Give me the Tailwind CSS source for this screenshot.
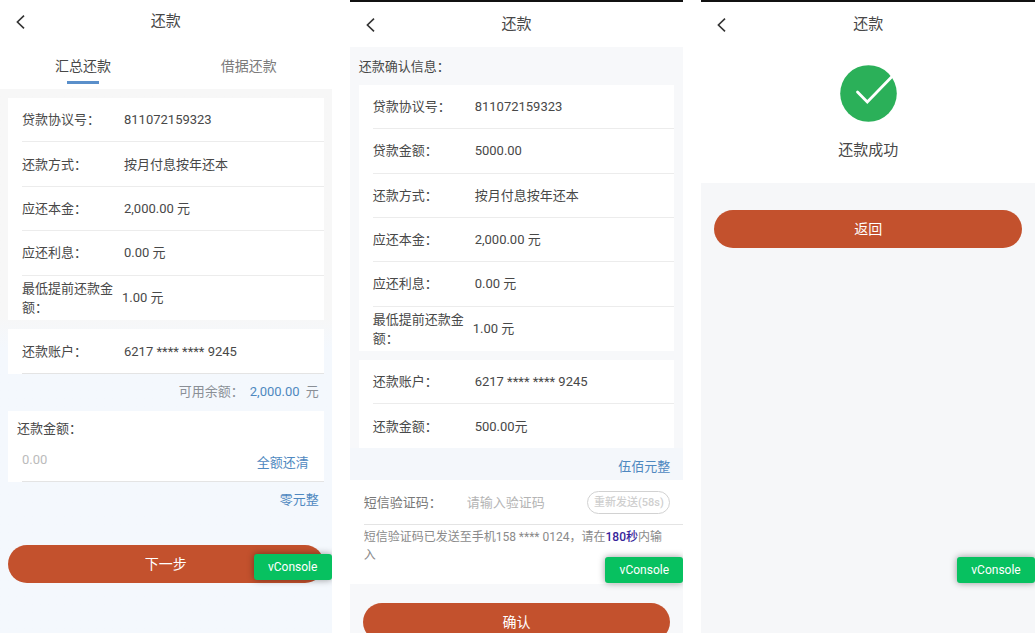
<!DOCTYPE html>
<html lang="zh-CN">
<head>
<meta charset="utf-8">
<meta name="viewport" content="width=device-width, initial-scale=1">
<title>还款</title>
<script src="https://cdn.jsdelivr.net/npm/@tailwindcss/browser@4"></script>
</head>
<body class="bg-white font-[Roboto,'Noto_Sans_CJK_SC',sans-serif] text-[13px] leading-[19px] text-[#484848]">
<div class="grid h-screen grid-cols-[332fr_334fr_334fr] gap-[18px] overflow-hidden">

  <!-- 汇总还款 -->
  <main class="relative flex min-w-0 flex-col overflow-hidden bg-linear-to-b from-[#f7f7f7] from-50% to-[#f4f8fd] to-55%">
    <header class="grid h-[43px] shrink-0 grid-cols-[1fr_auto_1fr] items-center bg-white px-4">
      <button type="button" aria-label="返回上一页" class="w-4">
        <svg class="h-4 w-2.5" viewBox="0 0 10 16" fill="none" stroke="#333" stroke-width="1.6"><path d="M8 1.6 1.4 8 8 14.4"/></svg>
      </button>
      <h1 class="text-[15px]">还款</h1>
    </header>
    <nav class="grid h-[46px] shrink-0 grid-cols-2 bg-white text-sm">
      <button type="button" class="flex flex-col items-center pt-[13px]">汇总还款<span class="mt-[5px] h-[3px] w-8 bg-[#5a8fca]"></span></button>
      <button type="button" class="flex flex-col items-center pt-[13px] text-[#7b7b7b]">借据还款</button>
    </nav>
    <div class="px-2 pt-[9px]">
      <dl class="grid h-[222px] grid-rows-5 bg-white pl-[14px]">
        <div class="flex items-center border-b border-[#ececec]"><dt class="w-[102px] shrink-0">贷款协议号：</dt><dd>811072159323</dd></div>
        <div class="flex items-center border-b border-[#ececec]"><dt class="w-[102px] shrink-0">还款方式：</dt><dd>按月付息按年还本</dd></div>
        <div class="flex items-center border-b border-[#ececec]"><dt class="w-[102px] shrink-0">应还本金：</dt><dd>2,000.00 元</dd></div>
        <div class="flex items-center border-b border-[#ececec]"><dt class="w-[102px] shrink-0">应还利息：</dt><dd>0.00 元</dd></div>
        <div class="flex items-center"><dt class="w-[100px] shrink-0 pr-2">最低提前还款金额：</dt><dd>1.00 元</dd></div>
      </dl>
      <dl class="mt-[9px] bg-white pl-[14px]">
        <div class="flex h-[45px] items-center border-b border-[#e4e4e4]"><dt class="w-[102px] shrink-0">还款账户：</dt><dd>6217 **** **** 9245</dd></div>
      </dl>
      <p class="flex h-[35px] items-center justify-end gap-1.5 pr-[5px] text-[#8a8f96]"><span>可用余额：</span><span class="text-[#4f88c0]">2,000.00</span><span>元</span></p>
      <section class="mt-[2px] bg-white pt-2 pl-[9px]">
        <label for="amount" class="block">还款金额：</label>
        <div class="ml-[5px] flex h-11 items-center border-b border-[#e4e4e4] pr-[15px]">
          <input id="amount" type="text" placeholder="0.00" class="min-w-0 flex-1 outline-none placeholder:text-[#bbb]">
          <button type="button" class="pt-[5px] text-[#4f88c0]">全额还清</button>
        </div>
      </section>
      <p class="flex h-[34px] items-center justify-end pr-[5px] text-[#4f88c0]">零元整</p>
      <button type="button" class="mt-[29px] h-[38px] w-full rounded-full bg-[#c3512d] text-sm text-white">下一步</button>
    </div>
    <button type="button" class="absolute right-0 bottom-[53px] h-[26px] w-[78px] rounded-[3px] bg-[#07c160] text-xs text-white shadow-[0_0_7px_rgba(0,0,0,0.4)]">vConsole</button>
  </main>

  <!-- 还款确认信息 -->
  <main class="relative flex min-w-0 flex-col overflow-hidden border-t-2 border-[#111] bg-[#f7f8fa]">
    <header class="grid h-[45px] shrink-0 grid-cols-[1fr_auto_1fr] items-center bg-white px-4">
      <button type="button" aria-label="返回上一页" class="w-4">
        <svg class="h-4 w-2.5" viewBox="0 0 10 16" fill="none" stroke="#333" stroke-width="1.6"><path d="M8 1.6 1.4 8 8 14.4"/></svg>
      </button>
      <h1 class="text-[15px]">还款</h1>
    </header>
    <h2 class="flex h-[38px] shrink-0 items-center pl-[9px]">还款确认信息：</h2>
    <div class="shrink-0 px-[9px]">
      <dl class="grid h-[266px] grid-rows-6 bg-white pl-[14px]">
        <div class="flex items-center border-b border-[#ececec]"><dt class="w-[102px] shrink-0">贷款协议号：</dt><dd>811072159323</dd></div>
        <div class="flex items-center border-b border-[#ececec]"><dt class="w-[102px] shrink-0">贷款金额：</dt><dd>5000.00</dd></div>
        <div class="flex items-center border-b border-[#ececec]"><dt class="w-[102px] shrink-0">还款方式：</dt><dd>按月付息按年还本</dd></div>
        <div class="flex items-center border-b border-[#ececec]"><dt class="w-[102px] shrink-0">应还本金：</dt><dd>2,000.00 元</dd></div>
        <div class="flex items-center border-b border-[#ececec]"><dt class="w-[102px] shrink-0">应还利息：</dt><dd>0.00 元</dd></div>
        <div class="flex items-center"><dt class="w-[100px] shrink-0 pr-2">最低提前还款金额：</dt><dd>1.00 元</dd></div>
      </dl>
      <dl class="mt-[9px] bg-white pl-[14px]">
        <div class="flex h-11 items-center border-b border-[#ececec]"><dt class="w-[102px] shrink-0">还款账户：</dt><dd>6217 **** **** 9245</dd></div>
        <div class="flex h-11 items-center"><dt class="w-[102px] shrink-0">还款金额：</dt><dd>500.00元</dd></div>
      </dl>
    </div>
    <p class="flex h-8 shrink-0 items-center justify-end bg-[#f4f7fb] pt-1 pr-[13px] text-[#4f88c0]">伍佰元整</p>
    <section class="h-[104px] shrink-0 bg-white pl-[14px]">
      <div class="flex h-[45px] items-center border-b border-[#e4e4e4] pr-[13px]">
        <label for="sms" class="w-[103px] shrink-0 text-[#777]">短信验证码：</label>
        <input id="sms" type="text" placeholder="请输入验证码" class="min-w-0 flex-1 outline-none placeholder:text-[#b4b4b4]">
        <button type="button" disabled class="h-[23px] w-[83px] shrink-0 rounded-full border border-[#d2d2d2] text-[11px] font-medium text-[#cfcfcf]">重新发送(58s)</button>
      </div>
      <p class="pt-[3px] pr-4 text-xs leading-[18px] text-[#8a8a8a]">短信验证码已发送至手机158 **** 0124，请在<span class="font-medium text-[#37249a]">180秒</span>内输入</p>
    </section>
    <div class="shrink-0 px-[13px] pt-[19px]">
      <button type="button" class="h-[38px] w-full rounded-full bg-[#c3512d] text-sm text-white">确认</button>
    </div>
    <button type="button" class="absolute right-0 bottom-[50px] h-[26px] w-[78px] rounded-[3px] bg-[#07c160] text-xs text-white shadow-[0_0_7px_rgba(0,0,0,0.4)]">vConsole</button>
  </main>

  <!-- 还款成功 -->
  <main class="relative flex min-w-0 flex-col overflow-hidden border-t-2 border-[#111] bg-[#f6f7f9]">
    <header class="grid h-[45px] shrink-0 grid-cols-[1fr_auto_1fr] items-center bg-white px-4">
      <button type="button" aria-label="返回上一页" class="w-4">
        <svg class="h-4 w-2.5" viewBox="0 0 10 16" fill="none" stroke="#333" stroke-width="1.6"><path d="M8 1.6 1.4 8 8 14.4"/></svg>
      </button>
      <h1 class="text-[15px]">还款</h1>
    </header>
    <section class="flex h-[136px] shrink-0 flex-col items-center bg-white pt-[18px]">
      <svg class="size-[57px]" viewBox="0 0 57 57" fill="none"><circle cx="28.5" cy="28.5" r="28.3" fill="#2bb059"/><path d="m17.5 27 9.8 10L53 10.5" stroke="#fff" stroke-width="2.8" stroke-linecap="round"/></svg>
      <p class="mt-[19px] text-[15px]">还款成功</p>
    </section>
    <div class="px-[13px] pt-[27px]">
      <button type="button" class="h-[38px] w-full rounded-full bg-[#c3512d] text-sm text-white">返回</button>
    </div>
    <button type="button" class="absolute right-0 bottom-[50px] h-[26px] w-[78px] rounded-[3px] bg-[#07c160] text-xs text-white shadow-[0_0_7px_rgba(0,0,0,0.4)]">vConsole</button>
  </main>
</div>
</body>
</html>
